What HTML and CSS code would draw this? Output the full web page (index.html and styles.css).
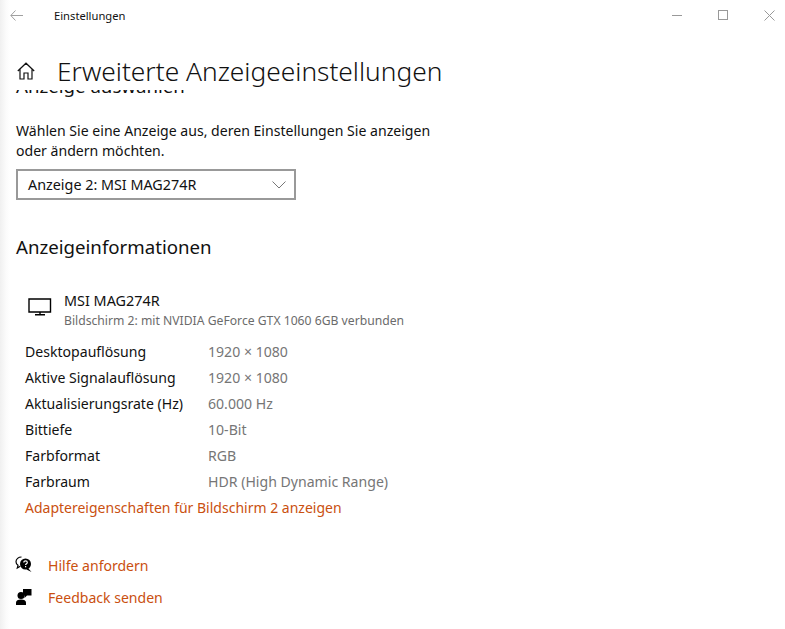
FILE: index.html
```html
<!DOCTYPE html>
<html lang="de">
<head>
<meta charset="utf-8">
<title>Einstellungen</title>
<link rel="stylesheet" href="styles.css">
</head>
<body>
<div class="window">
  <header class="titlebar">
    <svg class="back" width="13" height="11" viewBox="0 0 13 11"><path d="M5.500 .5 .8 5.500l4.700 5M1 5.500h12" fill="none" stroke="#a0a0a0" stroke-width="1"/></svg>
    <span class="apptitle">Einstellungen</span>
    <div class="controls">
      <svg width="11" height="11" viewBox="0 0 11 11"><path d="M0 5.500h10" stroke="#999" fill="none"/></svg>
      <svg width="11" height="11" viewBox="0 0 11 11"><rect x=".5" y=".5" width="9" height="9" stroke="#999" fill="none"/></svg>
      <svg width="11" height="11" viewBox="0 0 11 11"><path d="M.5.500l10 10M10.500.500l-10 10" stroke="#999" fill="none"/></svg>
    </div>
  </header>
  <div class="pagehead">
    <svg class="home" width="18" height="18" viewBox="0 0 18 18"><path d="M.8 9 9 1.200 17.200 9M3 7v10h4v-6h4v6h4V7" fill="none" stroke="#111" stroke-width="1.200"/></svg>
    <h1>Erweiterte Anzeigeeinstellungen</h1>
  </div>
  <main class="scroller">
    <h2 class="clipped">Anzeige auswählen</h2>
    <p class="intro">Wählen Sie eine Anzeige aus, deren Einstellungen Sie anzeigen oder ändern möchten.</p>
    <div class="select">
      <span>Anzeige 2: MSI MAG274R</span>
      <svg width="14" height="8" viewBox="0 0 14 8"><path d="M.5.500 7 7l6.500-6.500" fill="none" stroke="#777"/></svg>
    </div>
    <h2 class="section">Anzeigeinformationen</h2>
    <div class="monitor">
      <svg width="24" height="18" viewBox="0 0 24 18"><path d="M1 1h21.500v13H1zM12 14v2.500M7 16.800h10" fill="none" stroke="#000" stroke-width="1.400"/></svg>
      <div>
        <div class="monname">MSI MAG274R</div>
        <div class="monsub">Bildschirm 2: mit NVIDIA GeForce GTX 1060 6GB verbunden</div>
      </div>
    </div>
    <dl class="info">
      <dt>Desktopauflösung</dt><dd>1920 × 1080</dd>
      <dt>Aktive Signalauflösung</dt><dd>1920 × 1080</dd>
      <dt>Aktualisierungsrate (Hz)</dt><dd>60.000 Hz</dd>
      <dt>Bittiefe</dt><dd>10-Bit</dd>
      <dt>Farbformat</dt><dd>RGB</dd>
      <dt>Farbraum</dt><dd>HDR (High Dynamic Range)</dd>
    </dl>
    <a class="link adapter" href="#">Adaptereigenschaften für Bildschirm 2 anzeigen</a>
    <div class="help">
      <a class="helprow" href="#">
        <svg width="18" height="18" viewBox="0 0 18 18"><path d="M6.500 1C3.400 1 1 3 1 5.700c0 1.500.8 2.800 2 3.600L2.300 12l3-1.800" fill="none" stroke="#000" stroke-width="1.200"/><circle cx="10.500" cy="8" r="5.500" fill="#000"/><path d="M13 12l3.500 4-5-2.500z" fill="#000"/><path d="M8.800 6.500c0-2.200 3.500-2.200 3.500 0 0 1.300-1.700 1.300-1.700 2.600" fill="none" stroke="#fff" stroke-width="1.200"/><path d="M10 10h1.200v1.200H10z" fill="#fff"/></svg>
        <span>Hilfe anfordern</span>
      </a>
      <a class="helprow" href="#">
        <svg width="18" height="18" viewBox="0 0 18 18"><circle cx="6" cy="7.500" r="3.500" fill="#000"/><path d="M1 17v-2.500C1 12.500 3 11.500 6 11.500s5 1 5 3V17z" fill="#000"/><path d="M8 1h8.500v6.500H12L9.500 10V7.500H8z" fill="#000"/></svg>
        <span>Feedback senden</span>
      </a>
    </div>
  </main>
</div>
</body>
</html>
```
FILE: styles.css
```css
* { box-sizing: border-box; }
html, body { margin: 0; height: 100%; }
body {
  font-family: "Noto Sans", "Open Sans", "Liberation Sans", sans-serif;
  background: #fff;
  color: #111;
  overflow: hidden;
}
.window {
  width: 785px;
  height: 629px;
  display: flex;
  flex-direction: column;
  background: linear-gradient(to right, #f0f0f0 0, #fbfbfb 6px, #fff 10px);
}
.titlebar {
  height: 32px;
  flex: none;
  display: flex;
  align-items: center;
  padding: 0 0 2px 10px;
}
.back { flex: none; }
.apptitle {
  margin-left: 31px;
  font-size: 11.200px;
  color: #111;
}
.controls {
  margin-left: auto;
  padding-right: 10px;
  display: flex;
  gap: 35px;
}
.pagehead {
  height: 58px;
  flex: none;
  display: flex;
  align-items: center;
  padding: 20px 0 0 17px;
}
.home { flex: none; }
h1 {
  margin: 0 0 0 22px;
  font-size: 26.300px;
  font-weight: 300;
  color: #111;
  white-space: nowrap;
}
.scroller {
  flex: 1;
  overflow: hidden;
  padding-left: 16px;
}
.clipped {
  margin: -18px 0 0;
  font-size: 18.670px;
  font-weight: 400;
  line-height: 28px;
}
.intro {
  margin: 21px 0 0;
  width: 430px;
  font-size: 14.080px;
  line-height: 20px;
}
.select {
  margin-top: 8px;
  width: 280px;
  height: 31px;
  border: 2px solid #999;
  display: flex;
  align-items: center;
  justify-content: space-between;
  padding: 0 8px 0 10px;
  font-size: 14.350px;
}
.section {
  margin: 33px 0 0;
  font-size: 18.670px;
  font-weight: 400;
  line-height: 28px;
}
.monitor {
  margin: 30px 0 0 12px;
  display: flex;
  gap: 24px;
  align-items: flex-start;
}
.monitor svg { margin-top: 7px; flex: none; }
.monitor > div { margin-left: -12px; }
.monname { font-size: 14.400px; line-height: 20px; }
.monsub { font-size: 12.180px; line-height: 19px; color: #6b6b6b; }
.info {
  margin: 8px 0 0 9px;
  display: grid;
  grid-template-columns: 183px 1fr;
  grid-auto-rows: 26px;
  align-items: center;
  font-size: 14.080px;
}
.info dt { margin: 0; }
.info dd { margin: 0; color: #767676; font-size: 14.100px; }
.link { color: #ca5010; text-decoration: none; font-size: 14px; }
.adapter { display: block; margin: 1px 0 0 9px; line-height: 26px; }
.help { margin-top: 35px; display: flex; flex-direction: column; gap: 14px; }
.helprow { display: flex; align-items: center; gap: 15px; color: #ca5010; text-decoration: none; font-size: 14.060px; height: 18px; }
.helprow svg { flex: none; margin-left: -1px; }
```
